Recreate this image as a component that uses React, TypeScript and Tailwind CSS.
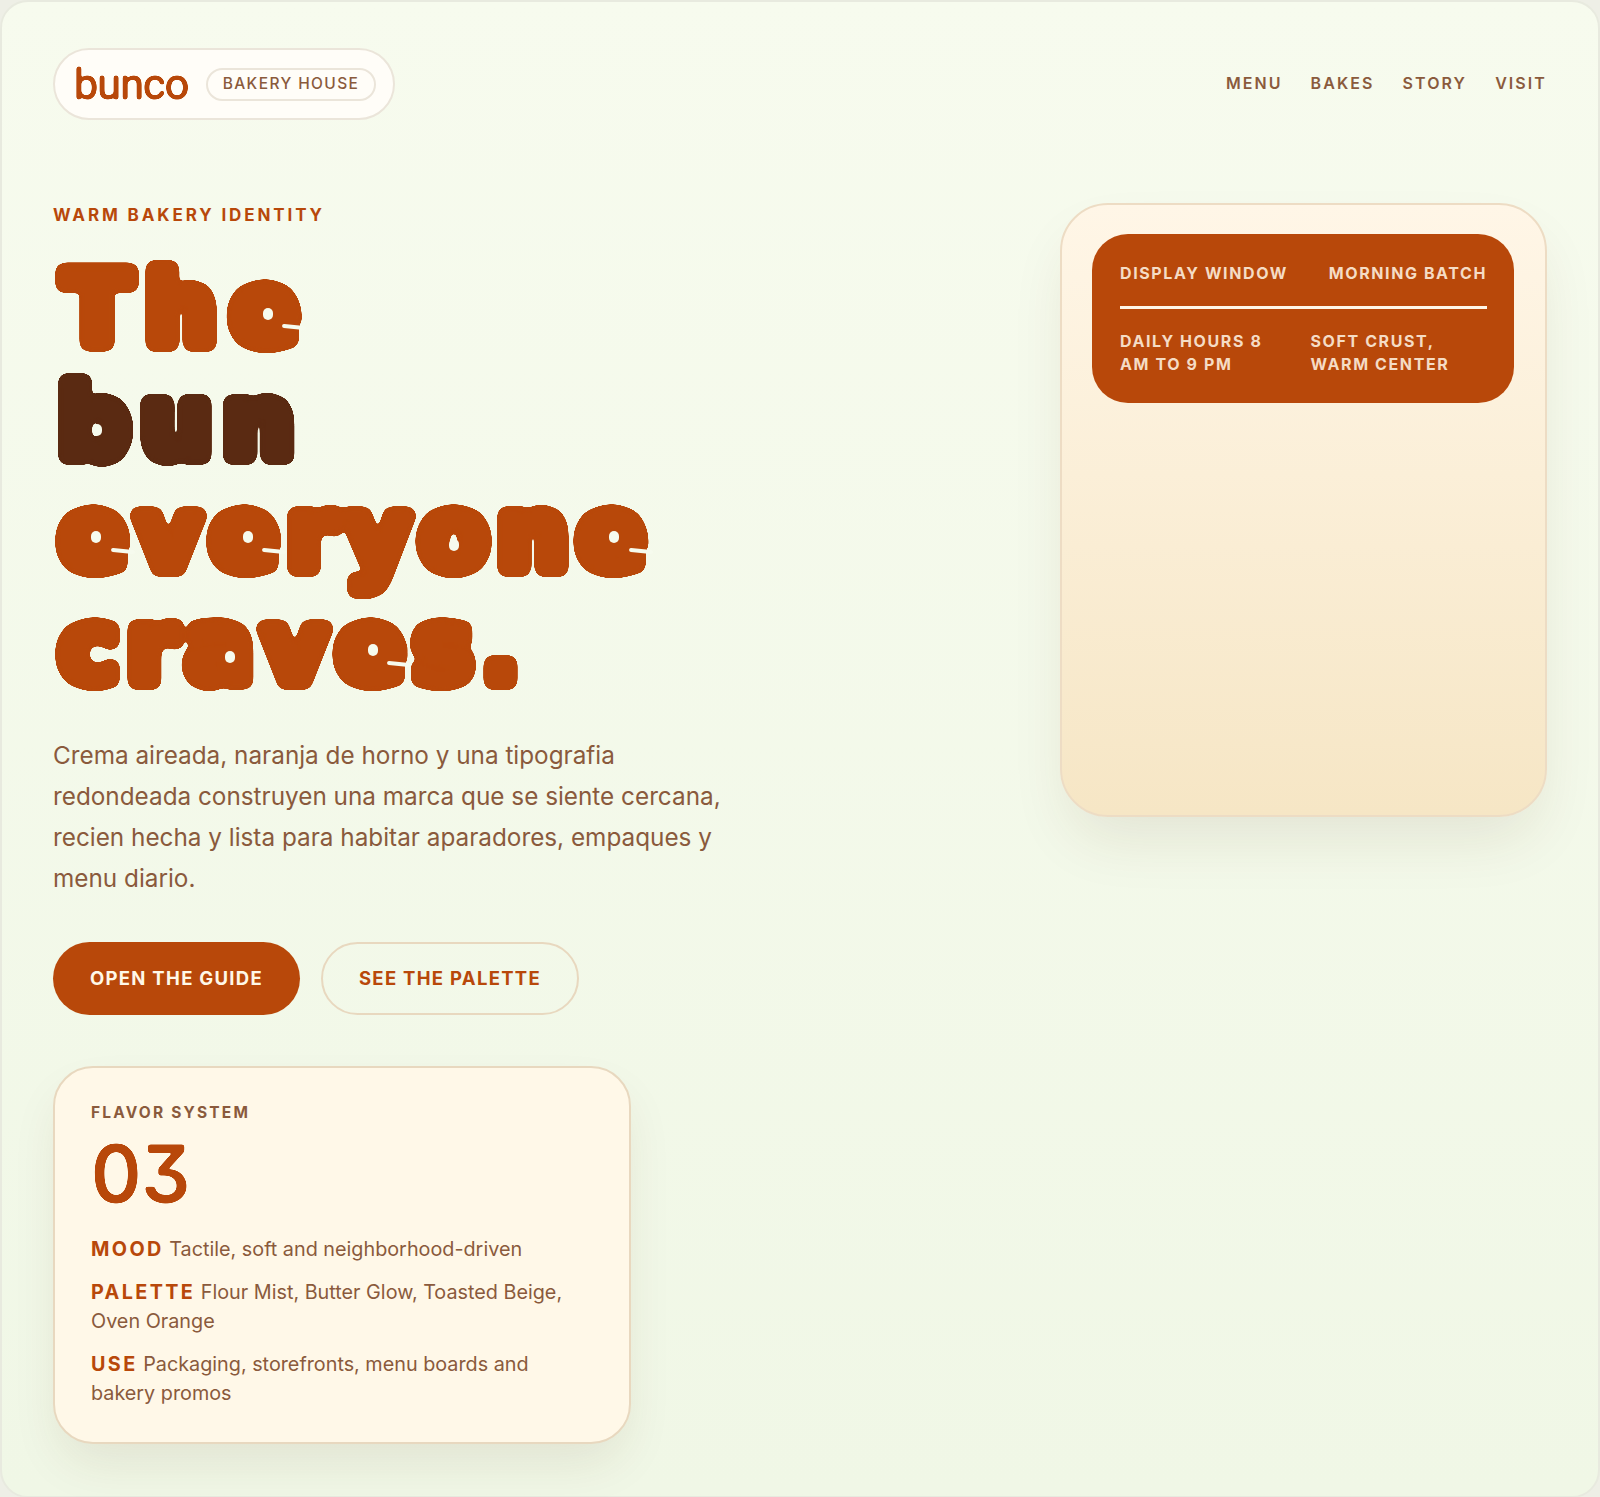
const inter = "font-['Inter','Liberation_Sans',sans-serif]";

// counters of the puffy headline letters, placed over the word shapes
const eyes = [
  "left-[210px] top-[54px]",
  "left-[39px] top-[170px]",
  "left-[38px] top-[277px]",
  "left-[190px] top-[277px]",
  "left-[396px] top-[285px]",
  "left-[556px] top-[277px]",
  "left-[172px] top-[397px]",
  "left-[315px] top-[390px]",
];

// slit that opens the lower right of each e
const slits = [
  "left-[229px] top-[71px]",
  "left-[58px] top-[295px]",
  "left-[209px] top-[295px]",
  "left-[576px] top-[295px]",
  "left-[334px] top-[408px]",
];

function Row({ label, children }: { label: string; children: React.ReactNode }) {
  return (
    <p className="text-[19.8px] leading-[29px] text-[#8a5a3c]">
      <strong className="font-bold tracking-[0.12em] text-[#b8480a]">{label}</strong> {children}
    </p>
  );
}

export default function App() {
  return (
    <div className="bg-[#eeefe6]">
      <svg className="absolute h-0 w-0" aria-hidden="true">
        <filter id="puff" colorInterpolationFilters="sRGB">
          <feGaussianBlur stdDeviation="2" />
          <feColorMatrix values="1 0 0 0 0 0 1 0 0 0 0 0 1 0 0 0 0 0 18 -7.5" />
        </filter>
        <filter id="soft" colorInterpolationFilters="sRGB">
          <feGaussianBlur stdDeviation="0.8" />
          <feColorMatrix values="1 0 0 0 0 0 1 0 0 0 0 0 1 0 0 0 0 0 6 -1.5" />
        </filter>
      </svg>
      <div className={`${inter} min-h-[1497px] rounded-[28px] border-2 border-[#e8eadf] bg-gradient-to-b from-[#f7fbee] to-[#f0f7e6] px-[51px] pb-[52px] pt-[46px]`}>
        <header className="flex items-center justify-between">
          <div className="flex h-[72px] w-[342px] items-center rounded-full border-2 border-[#ebe5da] bg-[#fffdf8] pl-[19px]">
            <span className="w-[115px] font-['Roboto',sans-serif] text-[43px] font-normal leading-none tracking-[-0.02em] text-[#b8480a] [filter:url(#soft)]">bunco</span>
            <span className="ml-[17px] flex h-[33px] w-[170px] items-center justify-center rounded-full border-2 border-[#ebe5da] text-[15.5px] font-medium tracking-[0.09em] text-[#8a5a3c]">
              BAKERY HOUSE
            </span>
          </div>
          <nav className="mb-[2px] flex gap-[28px] text-[16px] font-semibold tracking-[0.13em] text-[#8a5a3c]">
            <a>MENU</a>
            <a>BAKES</a>
            <a>STORY</a>
            <a>VISIT</a>
          </nav>
        </header>

        <main className="mt-[83px] flex items-start justify-between">
          <section className="w-[680px] pt-[1px]">
            <p className="text-[17px] font-bold leading-[22px] tracking-[0.17em] text-[#b8480a]">WARM BAKERY IDENTITY</p>
            <h1 className="relative mt-[28px] font-['DejaVu_Sans',sans-serif] text-[100px] font-bold leading-[112.5px] text-[#b8480a]">
              <div className="[filter:url(#puff)] [text-shadow:8px_0,7.4px_3.1px,5.7px_5.7px,3.1px_7.4px,0_8px,-3.1px_7.4px,-5.7px_5.7px,-7.4px_3.1px,-8px_0,-7.4px_-3.1px,-5.7px_-5.7px,-3.1px_-7.4px,0_-8px,3.1px_-7.4px,5.7px_-5.7px,7.4px_-3.1px]">
                <span className="block pl-[10px] tracking-[14px]">The</span>
                <span className="block pl-[5px] tracking-[11px] text-[#5a2a12]">bun</span>
                <span className="block pl-[6px] tracking-[9px]">everyone</span>
                <span className="block pl-[6px] tracking-[9px]">craves.</span>
              </div>
              {eyes.map((pos) => (
                <i key={pos} className={`absolute h-[12px] w-[10px] rounded-full bg-[#f6fbee] ${pos}`} />
              ))}
              {slits.map((pos) => (
                <i key={pos} className={`absolute h-[4px] w-[24px] rotate-[6deg] rounded-full bg-[#f6fbee] ${pos}`} />
              ))}
            </h1>
            <p className="mt-[31px] text-[24.3px] leading-[41px] text-[#8a5a3c]">
              Crema aireada, naranja de horno y una tipografia redondeada construyen una marca que se siente cercana, recien hecha y lista para habitar aparadores, empaques y menu diario.
            </p>
            <div className="mt-[43px] flex gap-[21px]">
              <a className="flex h-[73px] w-[247px] items-center justify-center rounded-full bg-[#b8480a] text-[18.5px] font-bold tracking-[0.07em] text-[#fff8e8]">
                OPEN THE GUIDE
              </a>
              <a className="flex h-[73px] w-[258px] items-center justify-center rounded-full border-2 border-[#e8d8bf] text-[18.5px] font-bold tracking-[0.07em] text-[#b8480a]">
                SEE THE PALETTE
              </a>
            </div>
            <div className="mt-[51px] h-[378px] w-[578px] rounded-[40px] border-2 border-[#e8d8bf] bg-[#fff8e8] px-[36px] pt-[34px] shadow-[0_24px_50px_-8px_rgba(90,50,20,0.1)]">
              <p className="text-[15.5px] font-bold leading-[22px] tracking-[0.14em] text-[#8a5a3c]">FLAVOR SYSTEM</p>
              <p className="mt-[6px] text-[78px] font-medium leading-[88px] text-[#b8480a] [filter:url(#soft)] [font-feature-settings:'cv09']">03</p>
              <div className="mt-[17px] flex w-[490px] flex-col gap-[14px]">
                <Row label="MOOD">Tactile, soft and neighborhood-driven</Row>
                <Row label="PALETTE">Flour Mist, Butter Glow, Toasted Beige, Oven Orange</Row>
                <Row label="USE">Packaging, storefronts, menu boards and bakery promos</Row>
              </div>
            </div>
          </section>

          <aside className="h-[614px] w-[487px] rounded-[48px] border-2 border-[#eddcc4] bg-gradient-to-b from-[#fff6e7] to-[#f6e6c5] py-[29px] pl-[30px] pr-[31px] shadow-[0_30px_60px_-10px_rgba(90,50,20,0.1)]">
            <div className="rounded-[36px] bg-[#b8480a] pb-[27px] pl-[28px] pr-[27px] pt-[28px] text-[16px] font-bold leading-[23px] tracking-[0.1em] text-[#f5dcc5]">
              <div className="flex justify-between border-b-[3px] border-[#fff6e8] pb-[21px]">
                <span>DISPLAY WINDOW</span>
                <span>MORNING BATCH</span>
              </div>
              <div className="mt-[21px] grid grid-cols-2 gap-[14px]">
                <span className="pr-[10px]">DAILY HOURS 8 AM TO 9 PM</span>
                <span>SOFT CRUST, WARM CENTER</span>
              </div>
            </div>
          </aside>
        </main>
      </div>
    </div>
  );
}
